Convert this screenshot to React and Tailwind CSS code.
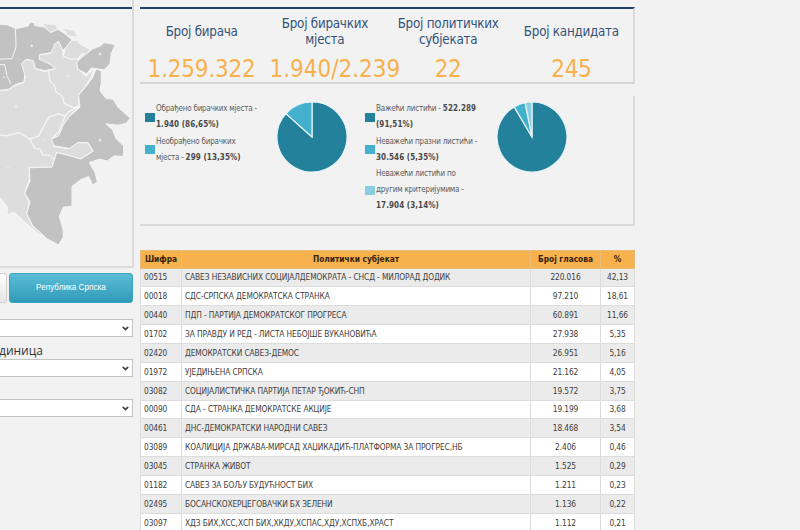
/**
 * Election results page — region map, turnout stats, ballot charts and party table
 */

import React from 'react';
import { ChevronDown } from 'lucide-react';

const STATS = [
  { label: ['Број бирача'], value: '1.259.322', cls: 'tracking-[-0.2px]' },
  { label: ['Број бирачких', 'мјеста'], value: '1.940/2.239', cls: 'tracking-[0px] pl-[20px]' },
  { label: ['Број политичких', 'субјеката'], value: '22', cls: 'tracking-[-0.4px]' },
  { label: ['Број кандидата'], value: '245', cls: 'tracking-[-0.4px]' },
];

const ROWS = [
  ['00515', 'САВЕЗ НЕЗАВИСНИХ СОЦИЈАЛДЕМОКРАТА - СНСД - МИЛОРАД ДОДИК', '220.016', '42,13'],
  ['00018', 'СДС-СРПСКА ДЕМОКРАТСКА СТРАНКА', '97.210', '18,61'],
  ['00440', 'ПДП - ПАРТИЈА ДЕМОКРАТСКОГ ПРОГРЕСА', '60.891', '11,66'],
  ['01702', 'ЗА ПРАВДУ И РЕД - ЛИСТА НЕБОЈШЕ ВУКАНОВИЋА', '27.938', '5,35'],
  ['02420', 'ДЕМОКРАТСКИ САВЕЗ-ДЕМОС', '26.951', '5,16'],
  ['01972', 'УЈЕДИЊЕНА СРПСКА', '21.162', '4,05'],
  ['03082', 'СОЦИЈАЛИСТИЧКА ПАРТИЈА ПЕТАР ЂОКИЋ-СНП', '19.572', '3,75'],
  ['00090', 'СДА - СТРАНКА ДЕМОКРАТСКЕ АКЦИЈЕ', '19.199', '3,68'],
  ['00461', 'ДНС-ДЕМОКРАТСКИ НАРОДНИ САВЕЗ', '18.468', '3,54'],
  ['03089', 'КОАЛИЦИЈА ДРЖАВА-МИРСАД ХАЏИКАДИЋ-ПЛАТФОРМА ЗА ПРОГРЕС,НБ', '2.406', '0,46'],
  ['03045', 'СТРАНКА ЖИВОТ', '1.525', '0,29'],
  ['01182', 'САВЕЗ ЗА БОЉУ БУДУЋНОСТ БИХ', '1.211', '0,23'],
  ['02495', 'БОСАНСКОХЕРЦЕГОВАЧКИ БХ ЗЕЛЕНИ', '1.136', '0,22'],
  ['03097', 'ХДЗ БИХ,ХСС,ХСП БИХ,ХКДУ,ХСПАС,ХДУ,ХСПХБ,ХРАСТ', '1.112', '0,21'],
];

const STATIONS = [
  { color: '#23819b', value: 86.65, lines: [['Обрађено бирачких мјеста -', ''], ['', '1.940 (86,65%)']] },
  { color: '#43b0ce', value: 13.35, lines: [['Необрађено бирачких', ''], ['мјеста - ', '299 (13,35%)']] },
];

const BALLOTS = [
  { color: '#23819b', value: 91.51, lines: [['Важећи листићи - ', '522.289'], ['', '(91,51%)']] },
  { color: '#43b0ce', value: 5.35, lines: [['Неважећи празни листићи -', ''], ['', '30.546 (5,35%)']] },
  { color: '#8acde0', value: 3.14, lines: [['Неважећи листићи по', ''], ['другим критеријумима -', ''], ['', '17.904 (3,14%)']] },
];

function Pie({ items }) {
  const point = (pct) => {
    const a = (pct / 100) * Math.PI * 2;
    return `${36 + 35 * Math.sin(a)} ${36 - 35 * Math.cos(a)}`;
  };
  let start = 0;
  return (
    <svg viewBox="0 0 72 72" className="w-[72px] h-[72px] shrink-0">
      {items.map((it) => {
        const end = start + it.value;
        const d = `M36 36L${point(start)}A35 35 0 ${it.value > 50 ? 1 : 0} 1 ${point(end)}Z`;
        start = end;
        return <path key={it.value} d={d} fill={it.color} stroke="#e4f4f8" strokeWidth="1.2" />;
      })}
    </svg>
  );
}

function Legend({ items }) {
  return (
    <div className="w-[130px] flex flex-col text-[8px] leading-[16px] tracking-[-0.22px] text-[#5c5c5c] whitespace-nowrap">
      {items.map((it) => (
        <div key={it.color} className="flex items-center gap-px mb-[0.6px]">
          <span className="w-[10px] h-[9px] shrink-0" style={{ background: it.color }} />
          <div>
            {it.lines.map(([text, bold]) => (
              <div key={text + bold} className="whitespace-pre">
                {text}<b className="text-[#4a4a4a] tracking-[0.08px]">{bold}</b>
              </div>
            ))}
          </div>
        </div>
      ))}
    </div>
  );
}

function RegionMap() {
  return (
    <svg viewBox="0 0 396 760" className="block w-[132px] h-[253px]" strokeLinejoin="round">
      {/* Federation */}
      <g fill="#dddddd" stroke="#f5f5f5" strokeWidth="4">
        <path d="M-10 272L22 270L46 256L70 248L76 232L66 212L64 190L78 178L100 180L106 206L134 214L164 206L146 194L118 180L118 164L150 160L160 130L176 124L188 146L190 168L212 178L238 168L232 204L258 228L282 206L274 232L252 266L236 286L238 320L206 352L184 410L158 414L162 440L206 446L232 428L262 428L280 454L242 478L208 468L170 458L156 502L88 504L88 540L74 580L88 606L80 642L98 680L142 718L112 702L62 656L42 638L20 646L22 622L-10 584Z" />
        <path d="M-10 404L20 408L56 398L90 418L116 408L146 352L176 342L196 348L206 336L238 318" fill="none" />
        <path d="M144 206L150 244L164 258L168 276L188 290L192 310L222 324L238 318" fill="none" />
        <path d="M90 418L104 446L120 448L128 466L150 466L160 478M196 348L176 396L154 418" fill="none" />
        <path d="M130 72L166 76L172 86L150 96ZM190 86L220 92L232 110L206 106Z" stroke="none" />
      </g>
      {/* Republika Srpska */}
      <g fill="#c2c2c2" stroke="#f5f5f5" strokeWidth="3">
        <path d="M-10 72L20 74L48 86L84 78L90 66L102 68L104 76L134 82L152 98L174 88L196 102L216 120L196 146L188 150L176 124L164 132L154 158L118 164L118 178L148 192L166 206L134 212L106 206L100 182L78 178L64 192L74 222L72 246L46 254L26 268L-10 272Z" />
        <path d="M262 158L280 146L302 138L312 128L346 134L334 160L330 192L312 210L286 206L274 204L260 222L234 208L230 188L246 172Z" />
        <path d="M288 208L304 212L304 250L300 272L318 296L340 298L354 322L391 355L378 371L354 376L318 372L338 390L348 416L371 438L371 470L342 468L322 484L300 478L268 488L286 520L292 546L278 556L266 530L242 540L216 560L216 620L190 622L178 650L190 694L190 712L176 736L142 718L98 678L80 642L90 606L74 580L90 544L88 504L156 502L170 458L210 468L242 478L280 454L264 428L234 428L208 446L162 438L154 418L176 408L190 376L206 352L240 322L236 286L256 262L276 236Z" />
        <path d="M46 86L48 140L36 176L-6 178M-4 194L14 194L20 226L32 252" fill="none" />
      </g>
      {/* Posavina */}
      <path d="M190 168L196 146L214 122L230 120L242 134L270 148L264 160L244 162L234 176L212 178Z" fill="#dddddd" stroke="#f5f5f5" strokeWidth="3" />
      <g fill="#e9e9e9">
        <circle cx="95" cy="138" r="4" /><circle cx="300" cy="162" r="4" />
        <circle cx="205" cy="228" r="4" /><circle cx="48" cy="320" r="5" />
        <circle cx="134" cy="421" r="3" /><circle cx="300" cy="421" r="4" />
        <circle cx="24" cy="504" r="4" /><circle cx="12" cy="232" r="3" />
      </g>
    </svg>
  );
}

function SelectBox() {
  return (
    <div className="w-[133px] h-[18px] flex items-center justify-end pr-[2px] bg-white border border-l-0 border-[#c4c4c4]">
      <ChevronDown className="w-[9px] h-[9px] text-[#444]" strokeWidth={4.5} />
    </div>
  );
}

export default function App() {
  return (
    <div className="w-[800px] h-[530px] flex overflow-hidden bg-[#f2f2f2] font-['DejaVu_Sans_Condensed','DejaVu_Sans',sans-serif] [font-stretch:condensed]">

      {/* Map and filters */}
      <aside className="w-[140px] shrink-0 [font-stretch:normal]">
        <div className="w-[134px] h-[268px] pt-[7px] border-r-2 border-b-2 border-[#dcdcdc]">
          <div className="h-[2px] bg-[#234269]" />
          <div className="-mt-[9px]"><RegionMap /></div>
        </div>
        <div className="flex gap-[2px] mt-[5px]">
          <div className="w-[7px] h-[30px] border border-l-0 border-[#d0d0d0] rounded-r-[3px] bg-gradient-to-b from-white to-[#e6e6e6]" />
          <button className="w-[124px] h-[30px] rounded-[3px] border border-[#3aa3bf] bg-gradient-to-b from-[#5abdd7] to-[#309bb9] text-white text-[8.2px] font-['Liberation_Sans',sans-serif]">
            Република Српска
          </button>
        </div>
        <div className="mt-[16px]"><SelectBox /></div>
        <div className="h-[22px] -ml-px pt-[6px] text-[12px] leading-[15px] text-[#333] font-['Open_Sans',sans-serif]">
          диница
        </div>
        <SelectBox />
        <div className="mt-[22px]"><SelectBox /></div>
      </aside>

      <main className="w-[495px] shrink-0 pt-[7px]">
        {/* Totals */}
        <section className="h-[77px] border-t-2 border-t-[#234269] border-r-2 border-r-[#dadada] border-b-2 border-b-[#d6d6d6] grid grid-cols-4">
          {STATS.map((s) => (
            <div key={s.value} className="flex flex-col items-center whitespace-nowrap">
              <div className="h-[46px] flex flex-col justify-center text-center text-[13.3px] leading-[16px] tracking-[-0.25px] text-[#34527a]">
                {s.label.map((l) => <div key={l}>{l}</div>)}
              </div>
              <div className={`pt-px text-[24px] leading-[27px] text-[#f7b14d] ${s.cls}`}>{s.value}</div>
            </div>
          ))}
        </section>

        {/* Charts */}
        <section className="h-[130px] mt-[12px] pt-[5px] pl-[5px] flex border-r-2 border-b-2 border-[#dadada]">
          <Legend items={STATIONS} />
          <div className="pl-px"><Pie items={STATIONS} /></div>
          <div className="w-[17px]" />
          <Legend items={BALLOTS} />
          <div className="pl-px"><Pie items={BALLOTS} /></div>
        </section>

        {/* Results */}
        <table className="w-[494px] mt-[24px] table-fixed border-collapse text-[8.3px] text-[#404040] whitespace-nowrap">
          <colgroup>
            <col className="w-[41px]" /><col className="w-[349px]" /><col className="w-[70px]" /><col className="w-[34px]" />
          </colgroup>
          <thead>
            <tr className="h-[17.5px] bg-[#f7b14d] text-[#35230a]">
              {['Шифра', 'Политички субјекат', 'Број гласова', '%'].map((h) => (
                <th key={h} className="p-0 border border-[#e9bc7b] font-bold leading-[12px]">{h}</th>
              ))}
            </tr>
          </thead>
          <tbody>
            {ROWS.map(([code, name, votes, pct]) => (
              <tr key={code} className="h-[18.86px] bg-white odd:bg-[#ebebeb]">
                <td className="p-0 pl-[3px] border border-[#dcdcdc] leading-[12px] tracking-[-0.1px]">{code}</td>
                <td className="p-0 pl-[3px] border border-[#dcdcdc] leading-[12px] tracking-[-0.11px]">{name}</td>
                <td className="p-0 border border-[#dcdcdc] leading-[12px] text-center tracking-[-0.1px]">{votes}</td>
                <td className="p-0 border border-[#dcdcdc] leading-[12px] text-center tracking-[-0.1px]">{pct}</td>
              </tr>
            ))}
          </tbody>
        </table>
      </main>
    </div>
  );
}
